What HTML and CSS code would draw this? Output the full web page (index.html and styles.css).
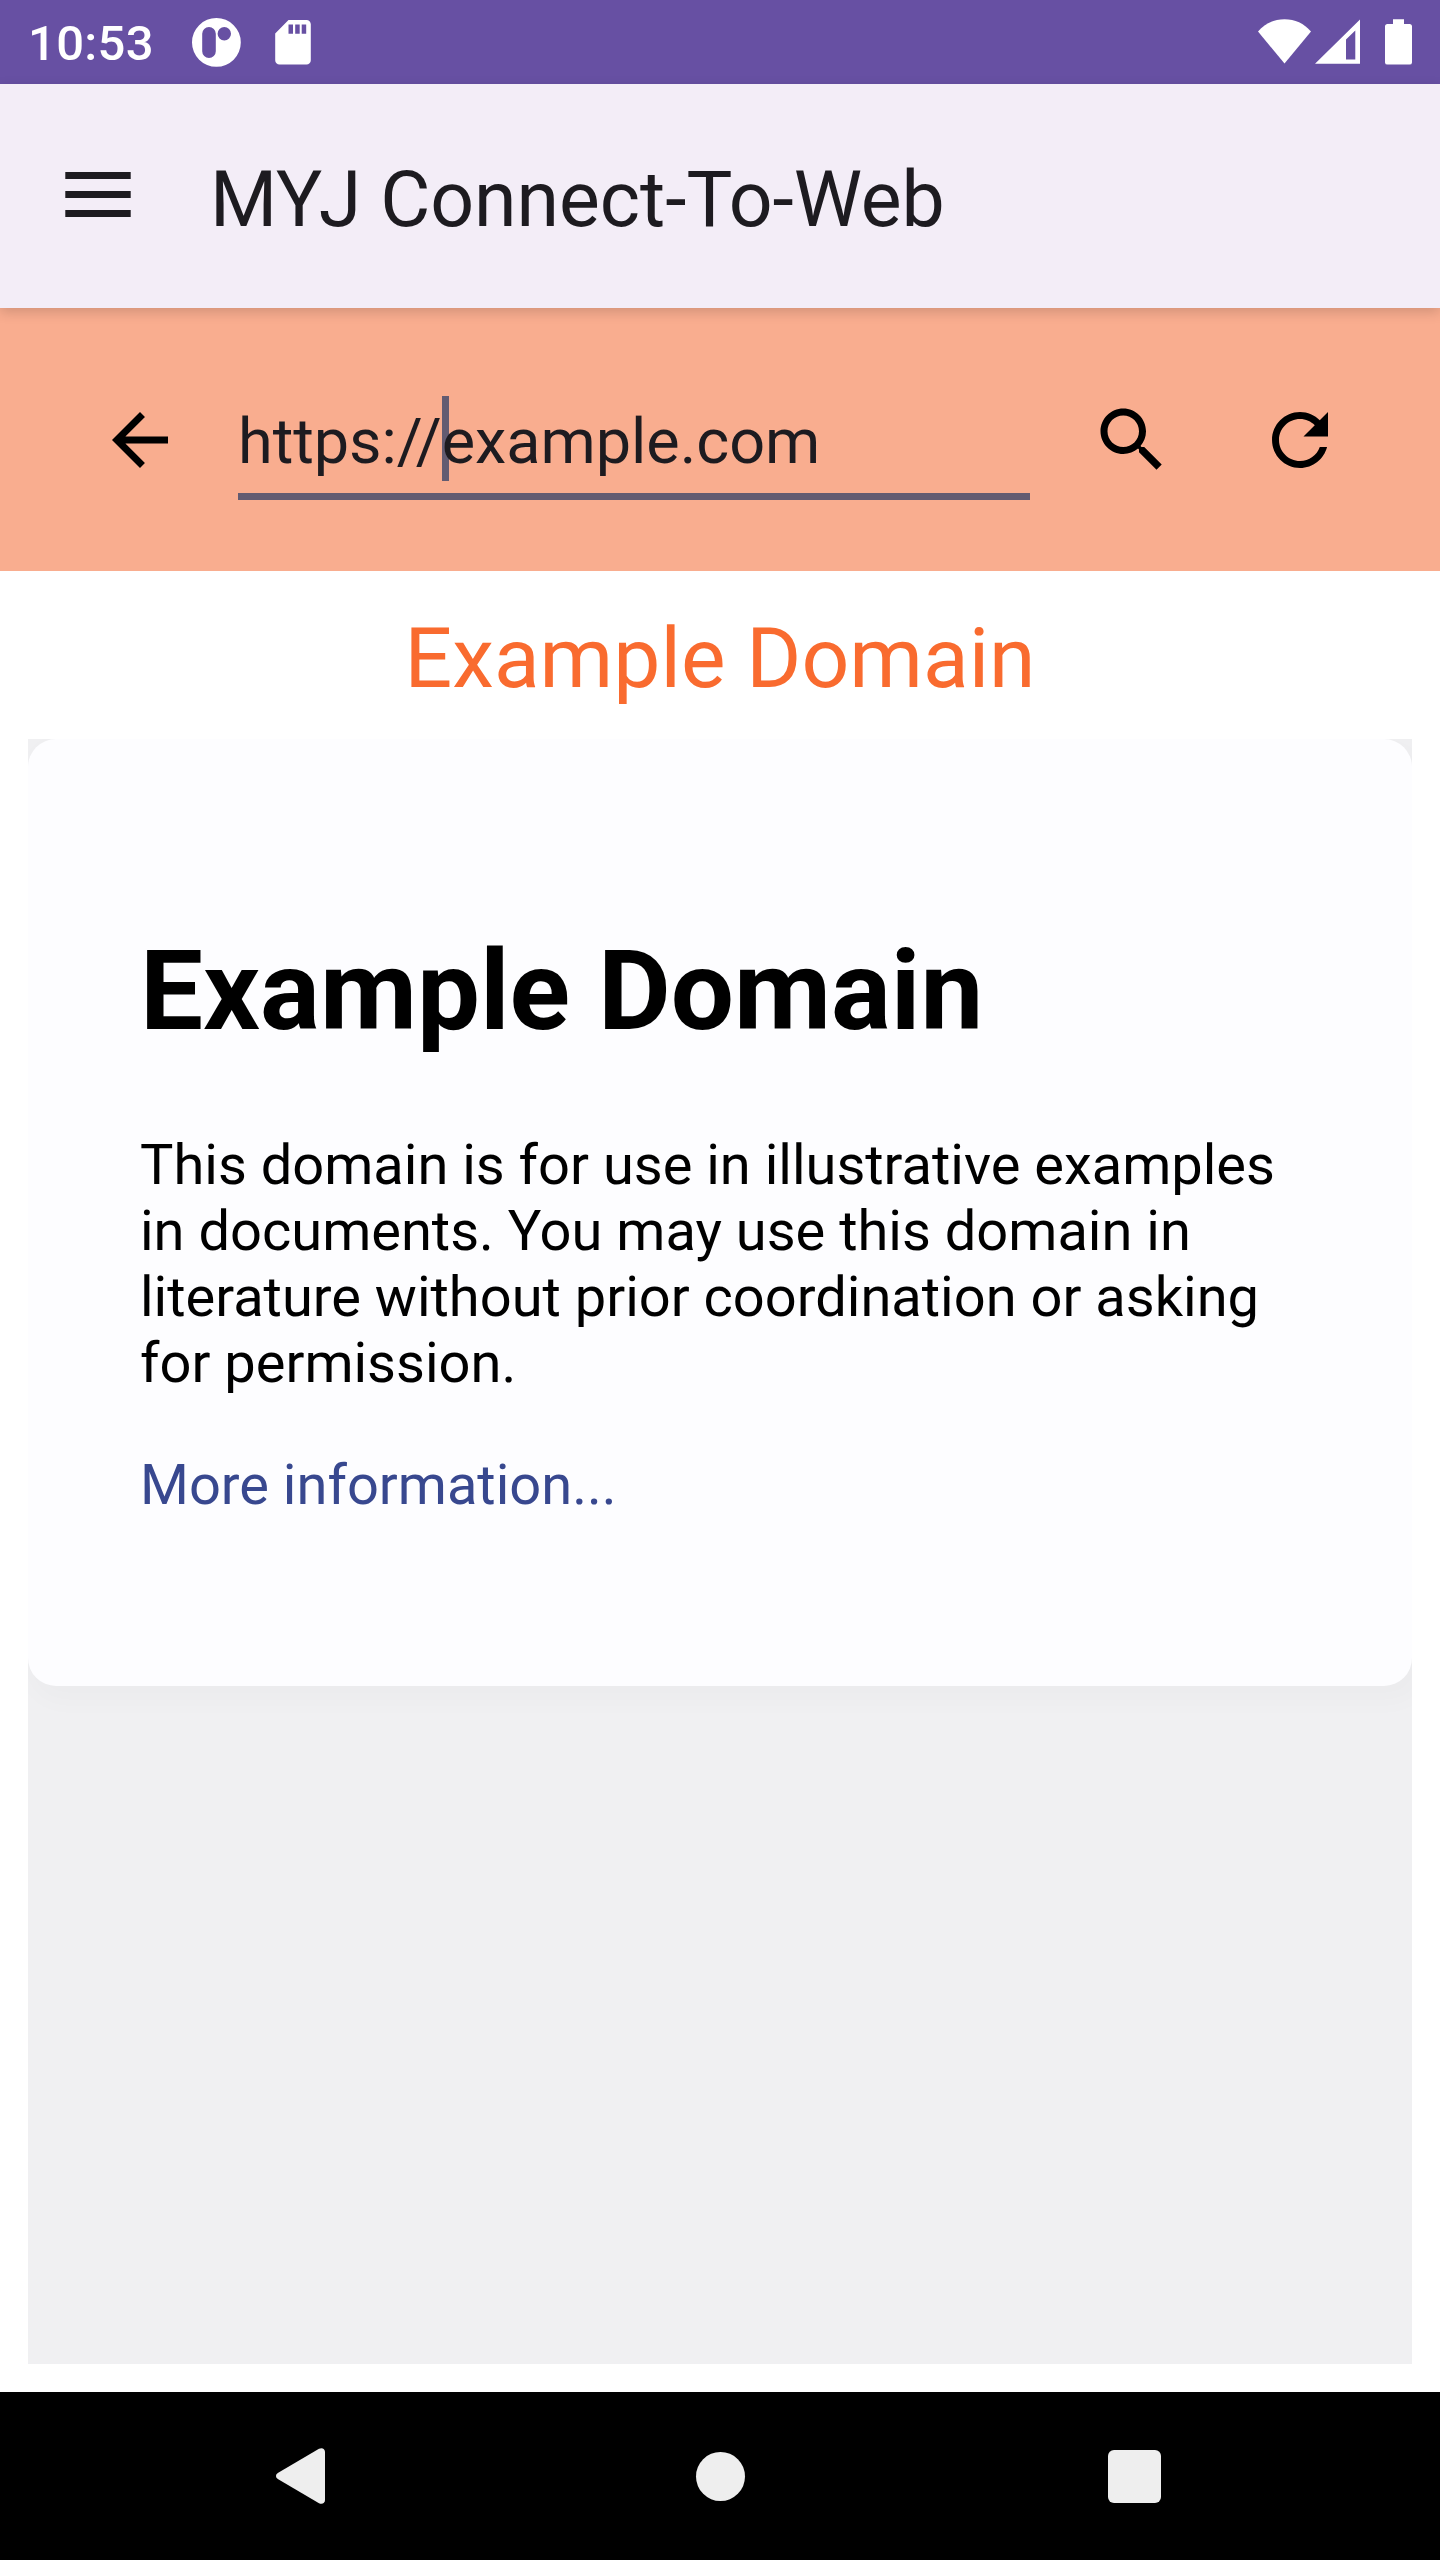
FILE: index.html
```html
<!DOCTYPE html>
<html lang="en">
<head>
<meta charset="utf-8">
<title>MYJ Connect-To-Web</title>
<link rel="stylesheet" href="styles.css">
</head>
<body>
<div class="screen">
  <div class="status">
    <span class="clock">10:53</span>
    <svg class="app-badge" viewBox="0 0 49 49" width="49" height="49"><path fill="#fff" fill-rule="evenodd" d="M24.4 0a24.4 24.4 0 1 1 0 48.8a24.4 24.4 0 1 1 0-48.8zM17 9a6.8 6.8 0 0 0-6.800 6.800v17.400a6.800 6.800 0 0 0 13.600 0v-17.400a6.800 6.800 0 0 0-6.800-6.800zM32.300 9a6.700 6.700 0 1 0 0 13.400a6.700 6.700 0 1 0 0-13.400z"/></svg>
    <svg class="sd-card" viewBox="0 0 36 45" width="36" height="45"><path fill="#fff" fill-rule="evenodd" d="M13.500 0H31.500A4.300 4.300 0 0 1 35.800 4.300V40.300A4.300 4.300 0 0 1 31.500 44.600H4.500A4.300 4.300 0 0 1 .2 40.300V13.500zM13.500 4.500v9.200h4.500V4.500zM20.200 4.500v9.200h4.500V4.500zM26.700 4.500v9.200h4.500V4.500z"/></svg>
    <span class="fill"></span>
    <svg class="wifi" viewBox="0 0 53 45" width="53" height="45"><path fill="#fff" d="M0 12.500C7 4.500 16 .3 26.500 .3S46 4.500 53 12.500L26.500 44.500z"/></svg>
    <svg class="signal" viewBox="0 0 45 45" width="45" height="45"><path fill="#fff" fill-rule="evenodd" d="M45 .5V44.800H0zM31 20.500V40.500H40.300V11.500z"/></svg>
    <svg class="battery" viewBox="0 0 27 46" width="27" height="46"><path fill="#fff" d="M8 .3H19V5H24.500A2.500 2.500 0 0 1 27 7.500V43A2.500 2.500 0 0 1 24.500 45.600H2.500A2.500 2.500 0 0 1 0 43V7.500A2.500 2.500 0 0 1 2.500 5H8z"/></svg>
  </div>
  <header class="appbar">
    <svg class="menu" viewBox="0 0 66 45" width="66" height="45"><path fill="#1d1b20" d="M.3 0h65.400v7H.3zM.3 19h65.400v7H.3zM.3 38h65.400v7H.3z"/></svg>
    <h1 class="app-title">MYJ Connect-To-Web</h1>
  </header>
  <div class="toolbar">
    <svg class="icon back" viewBox="0 0 24 24"><path d="M20 11H7.830l5.590-5.590L12 4l-8 8 8 8 1.410-1.410L7.830 13H20v-2z"/></svg>
    <div class="field"><span class="url">https://<span class="caret"></span>example.com</span></div>
    <svg class="icon search" viewBox="0 0 24 24"><path d="M15.500 14h-.79l-.28-.27C15.410 12.590 16 11.110 16 9.500 16 5.910 13.090 3 9.500 3S3 5.910 3 9.500 5.910 16 9.500 16c1.610 0 3.090-.59 4.230-1.570l.27.28v.79l5 4.990L20.490 19l-4.990-5zm-6 0C7.010 14 5 11.990 5 9.500S7.010 5 9.500 5 14 7.010 14 9.500 11.990 14 9.500 14z"/></svg>
    <svg class="icon refresh" viewBox="0 0 24 24"><path d="M17.650 6.350C16.200 4.900 14.210 4 12 4c-4.420 0-7.990 3.580-7.990 8s3.570 8 7.990 8c3.730 0 6.840-2.550 7.730-6h-2.080c-.82 2.330-3.040 4-5.650 4-3.310 0-6-2.690-6-6s2.690-6 6-6c1.660 0 3.140.69 4.220 1.780L13 11h7V4l-2.350 2.350z"/></svg>
  </div>
  <h2 class="page-title">Example Domain</h2>
  <main class="webview">
    <article class="card">
      <h1>Example Domain</h1>
      <p>This domain is for use in illustrative examples in documents. You may use this domain in literature without prior coordination or asking for permission.</p>
      <p><a href="#">More information...</a></p>
    </article>
  </main>
  <nav class="navbar">
    <svg class="nav-back" viewBox="0 0 49 56" width="49" height="56"><path fill="#eee" d="M43 .8C46 -.8 49 .8 49 4V52C49 55.200 46 56.800 43 55.200L1.800 31C-.6 29.500-.6 26.500 1.800 25z"/></svg>
    <span class="nav-home"></span>
    <span class="nav-recent"></span>
  </nav>
</div>
</body>
</html>
```
FILE: styles.css
```css
* { box-sizing: border-box; }
body { margin: 0; font-family: Roboto, sans-serif; background: #fff; }
.screen { width: 1440px; height: 2560px; display: flex; flex-direction: column; overflow: hidden; }
.status { height: 84px; flex: none; display: flex; align-items: flex-start; background: #6750a3; color: #fff; }
.clock { width: 164px; padding-left: 28px; margin-right: 28px; font-size: 49px; font-weight: 500; line-height: 58px; letter-spacing: .3px; padding-top: 15px; white-space: nowrap; }
.app-badge { margin-top: 18px; }
.sd-card { margin: 20px 0 0 34px; }
.fill { flex: 1; }
.wifi { margin-top: 19px; }
.signal { margin: 19px 0 0 4px; }
.battery { margin: 19px 28px 0 25px; }
.appbar { height: 224px; flex: none; display: flex; align-items: flex-start; background: #f3edf7; position: relative; box-shadow: 0 4px 12px rgba(0,0,0,.16); }
.menu { margin: 88px 0 0 65px; }
.app-title { margin: 71px 0 0 79px; font-size: 77px; font-weight: 400; line-height: 90px; letter-spacing: -.05px; color: #1d1b20; white-space: nowrap; }
.toolbar { height: 263px; flex: none; display: flex; align-items: flex-start; background: #f9ad8f; }
.icon { width: 84px; height: 84px; flex: none; margin-top: 90px; fill: #000; }
.back { margin-left: 98px; }
.field { width: 792px; height: 108px; margin: 84px 0 0 56px; border-bottom: 7px solid #635b71; }
.url { display: block; padding: 13px 0 0 0; font-size: 63px; line-height: 74px; letter-spacing: -.05px; color: #1d1b20; white-space: nowrap; }
.caret { display: inline-block; width: 7px; height: 85px; margin: -20px -7px -20px 0; vertical-align: 2px; background: #635b71; }
.search { margin-left: 60px; }
.refresh { margin-left: 84px; }
.page-title { height: 168px; flex: none; margin: 0; padding-top: 39px; font-size: 84px; font-weight: 400; line-height: 98px; text-align: center; color: #f96b2f; }
.webview { flex: 1; margin: 0 28px 28px; overflow: hidden; background: #f0f0f2; }
.card { height: 947px; padding: 186px 112px 0; border-radius: 28px; background: #fdfdff; box-shadow: 7px 10px 25px 7px rgba(0,0,0,.02); }
.card h1 { margin: 0 0 76px; font-size: 112px; line-height: 131px; color: #000; }
.card p { margin: 0 0 56px; font-size: 56px; line-height: 66px; color: #000; }
.card a { color: #38488f; text-decoration: none; }
.navbar { height: 168px; flex: none; display: flex; align-items: center; background: #000; }
.nav-back { margin-left: 276px; }
.nav-home { width: 49px; height: 49px; margin-left: 370.5px; border-radius: 50%; background: #eee; }
.nav-recent { width: 53px; height: 53px; margin-left: 363.500px; border-radius: 6px; background: #eee; }
```
